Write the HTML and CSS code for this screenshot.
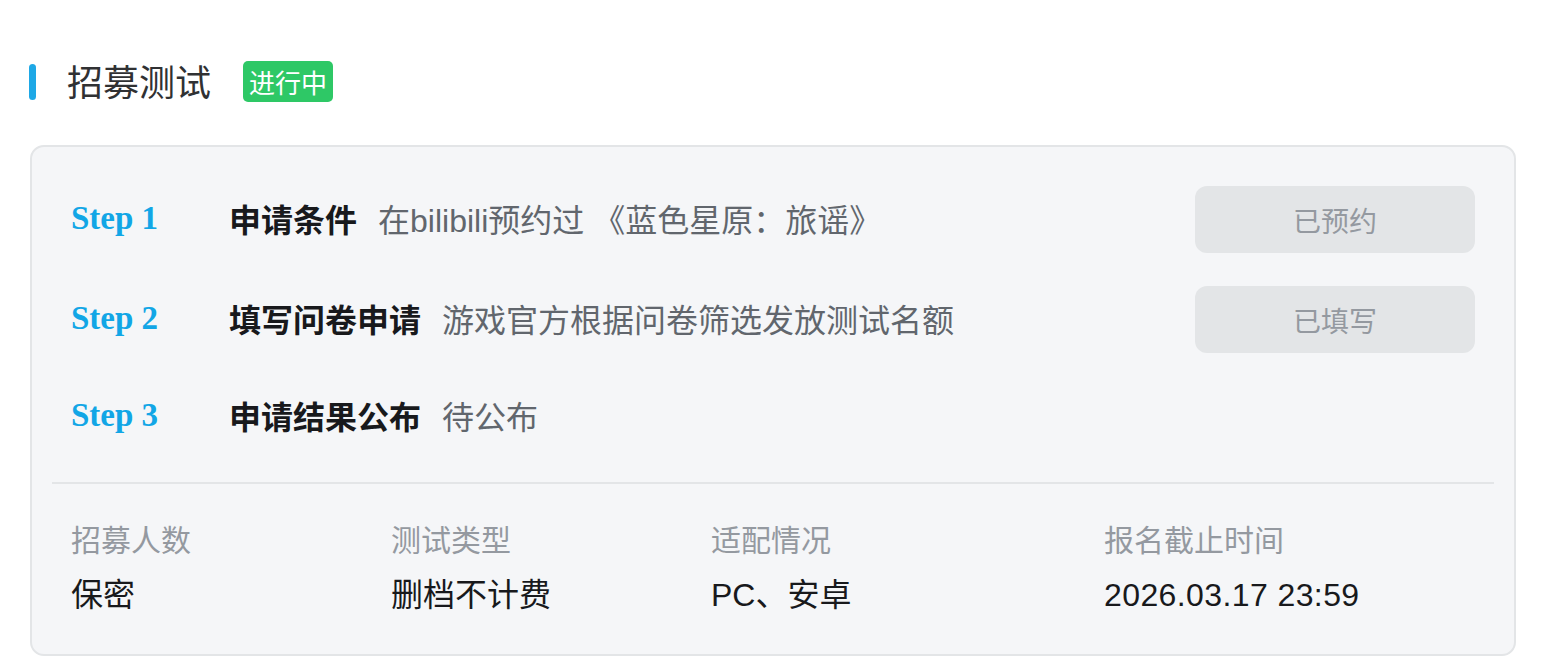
FILE: index.html
```html
<!DOCTYPE html>
<html lang="zh-CN">
<head>
<meta charset="utf-8">
<title>招募测试</title>
<link rel="stylesheet" href="styles.css">
</head>
<body>
<div class="page">
  <div class="header">
    <span class="bar"></span>
    <h2 class="title">招募测试</h2>
    <span class="badge">进行中</span>
  </div>
  <div class="card">
    <div class="steps">
      <div class="step">
        <div class="step-no">Step 1</div>
        <div class="step-name">申请条件</div>
        <div class="step-desc">在bilibili预约过 《蓝色星原：旅谣》</div>
        <div class="step-btn">已预约</div>
      </div>
      <div class="step">
        <div class="step-no">Step 2</div>
        <div class="step-name">填写问卷申请</div>
        <div class="step-desc">游戏官方根据问卷筛选发放测试名额</div>
        <div class="step-btn">已填写</div>
      </div>
      <div class="step step-last">
        <div class="step-no">Step 3</div>
        <div class="step-name">申请结果公布</div>
        <div class="step-desc">待公布</div>
      </div>
    </div>
    <div class="divider"></div>
    <div class="info">
      <div class="info-item">
        <div class="info-label">招募人数</div>
        <div class="info-value">保密</div>
      </div>
      <div class="info-item">
        <div class="info-label">测试类型</div>
        <div class="info-value">删档不计费</div>
      </div>
      <div class="info-item">
        <div class="info-label">适配情况</div>
        <div class="info-value">PC、安卓</div>
      </div>
      <div class="info-item">
        <div class="info-label">报名截止时间</div>
        <div class="info-value value-num">2026.03.17 23:59</div>
      </div>
    </div>
  </div>
</div>
</body>
</html>
```

FILE: styles.css
```css
* { box-sizing: border-box; }
html, body { margin: 0; padding: 0; background: #ffffff; }
body {
  font-family: "Liberation Sans", "Noto Sans CJK SC", sans-serif;
  color: #18191c;
}
.page {
  padding: 60px 46px 0 30px;
}
.header {
  display: flex;
  align-items: center;
  height: 43px;
}
.bar {
  width: 7px;
  height: 36px;
  border-radius: 4px;
  background: #1ea8e6;
  margin-left: -1px;
}
.title {
  margin: -3px 0 0 31px;
  font-size: 36px;
  font-weight: 400;
  color: #303133;
  line-height: 43px;
  font-family: "Noto Sans CJK SC", sans-serif;
}
.badge {
  margin-left: 32px;
  height: 41px;
  padding: 0 6px;
  display: flex;
  align-items: center;
  background: #2ec866;
  color: #ffffff;
  border-radius: 5px;
  font-size: 26px;
  font-family: "Noto Sans CJK SC", sans-serif;
}
.card {
  margin-top: 42px;
  border: 2px solid #e3e5e7;
  border-radius: 14px;
  background: #f5f6f8;
}
.steps {
  padding: 39px 39px 0 39px;
  display: flex;
  flex-direction: column;
  gap: 33px;
}
.step {
  display: flex;
  align-items: center;
  height: 67px;
}
.step-last { height: 60px; }
.step-no {
  width: 158px;
  flex: none;
  font-family: "Liberation Serif", serif;
  font-weight: 700;
  font-size: 33px;
  color: #12a6e6;
  margin-top: -2px;
}
.step-name {
  font-size: 32px;
  font-weight: 700;
  color: #18191c;
  white-space: nowrap;
  margin-top: -3px;
}
.step-desc {
  margin-left: 21px;
  margin-top: -3px;
  font-size: 32px;
  color: #61666d;
  flex: 1;
  white-space: nowrap;
}
.step-btn {
  width: 280px;
  height: 67px;
  flex: none;
  border-radius: 12px;
  background: #e3e5e7;
  color: #9499a0;
  font-size: 28px;
  display: flex;
  align-items: center;
  justify-content: center;
}
.divider {
  height: 2px;
  background: #e3e5e7;
  margin: 36px 20px 0 20px;
}
.info {
  display: grid;
  grid-template-columns: 320px 320px 393px 1fr;
  padding: 36px 39px 38px 39px;
}
.info-label {
  font-size: 30px;
  line-height: 42px;
  color: #9499a0;
}
.info-value {
  margin-top: 12px;
  font-size: 32px;
  line-height: 42px;
  color: #18191c;
}
.value-num {
  letter-spacing: 0.4px;
}
```
